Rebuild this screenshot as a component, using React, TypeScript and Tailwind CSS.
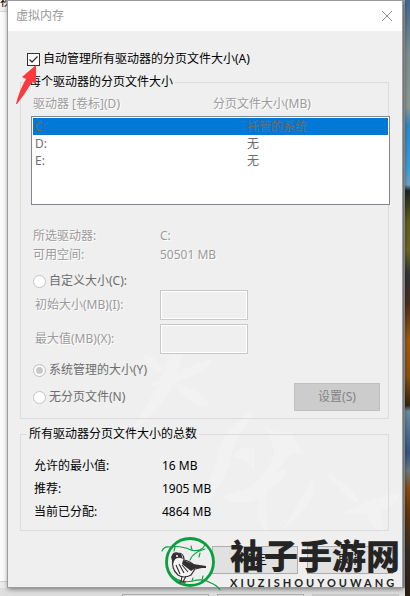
import type { ReactNode } from 'react'

const drives = [
  { name: 'C:', size: '托管的系统', selected: true },
  { name: 'D:', size: '无', selected: false },
  { name: 'E:', size: '无', selected: false },
]

const totals = [
  { label: '允许的最小值:', value: '16 MB' },
  { label: '推荐:', value: '1905 MB' },
  { label: '当前已分配:', value: '4864 MB' },
]

const embossed = 'text-[#9b9b9b] [text-shadow:1px_1px_#fff]'

function Group({ title, className, children }: { title: string; className: string; children: ReactNode }) {
  return (
    <fieldset className={`min-w-0 border border-[#dcdcdc] ${className}`}>
      <legend className="-ml-1 px-0.5 text-black">{title}</legend>
      {children}
    </fieldset>
  )
}

function Radio({ label, checked }: { label: string; checked?: boolean }) {
  return (
    <label className="flex items-center gap-[3px] text-[#6d6d6d]">
      <input
        type="radio"
        name="paging"
        disabled
        defaultChecked={checked}
        className="size-[13px] appearance-none rounded-full border border-[#c4c4c4] bg-white checked:bg-[#c8c8c8] checked:shadow-[inset_0_0_0_2px_#fff]"
      />
      {label}
    </label>
  )
}

function SizeField({ id, label }: { id: string; label: string }) {
  return (
    <div className="flex items-center pl-1">
      <label htmlFor={id} className={`w-[125px] ${embossed}`}>{label}</label>
      <input id={id} type="text" disabled className="h-[30px] w-[88px] border border-[#c8c8c8] bg-[#efefef] px-1 shadow-[inset_0_0_0_1px_#fff]" />
    </div>
  )
}

function Arrow() {
  return (
    <svg viewBox="0 0 24 40" className="absolute top-[64px] left-2 h-10 w-6" aria-hidden="true">
      <path d="M20 0 L6 12 L10 14 Q3 26 0 39 L1 39 Q9 29 16 17 L20 18 Z" fill="#fa3a3c" />
    </svg>
  )
}

function BirdLogo() {
  return (
    <svg viewBox="0 0 62 56" className="h-14 w-[62px] shrink-0" fill="none" aria-hidden="true">
      <circle cx="29" cy="27" r="23.5" stroke="#0a9f3c" strokeWidth="2.8" />
      <g stroke="#0a9f3c" strokeWidth="1.1" strokeLinecap="round">
        <path d="M1 16 Q3 11 8 12 Q20 10 30 15 Q37 17 42 13 L45 8" />
        <path d="M44 14 Q31 18 29 25 M31 15 L30 11 M39 18 L38 22 M14 12 L13 16" />
        <path d="M10 40 Q19 49 32 46 Q42 43 50 48 Q57 51 59 55" />
        <path d="M41 45 L42 41 M31 46 L32 43 M22 47 L25 50" />
      </g>
      <path d="M12 24 Q10 17 17 18 Q23 18 23 25 Q29 26 34 31 L43 32 L34 34 L30 40 Q23 44 17 40 Q10 34 12 24 Z" fill="#f5f5f5" stroke="#332f30" strokeWidth="1.2" />
      <path d="M10 22 Q13 16 20 19 L22 24 Q14 20 12 29 Z M22 25 L32 29 L45 31 L45 33 L35 33 L30 36 L21 29 Z" fill="#332f30" />
      <path d="M15 30 L19 39 M18 29 L23 38 M21 30 L27 37 M21 41 L20 47 M25 41 L22 47 M18 47 L25 47" stroke="#332f30" strokeWidth="1.1" />
      <circle cx="16" cy="21" r="1" fill="#fff" />
    </svg>
  )
}

function Brand() {
  return (
    <div className="absolute right-0.5 bottom-[-4px] flex items-start gap-[7px]" aria-label="袖子手游网">
      <BirdLogo />
      <div className="pt-0.5 text-[#242424]">
        <p className="text-[34px] leading-[38px] font-black whitespace-nowrap">袖子手游网</p>
        <p className="mt-0.5 font-['Lato'] text-[11px] leading-3 font-bold tracking-[3px] whitespace-nowrap">XIUZISHOUYOUWANG</p>
      </div>
    </div>
  )
}

function Brushwork() {
  return (
    <svg viewBox="0 0 280 200" className="pointer-events-none absolute right-0 bottom-[50px] h-[200px] w-[280px]" fill="#fff" opacity="0.22" aria-hidden="true">
      <path d="M20 18 Q32 16 42 34 Q34 40 20 18 Z M52 4 Q64 10 56 34 Q44 72 6 96 Q34 62 52 4 Z M26 48 Q52 36 88 22 Q92 32 62 42 Q42 52 26 48 Z M52 46 Q76 50 88 68 Q70 74 52 46 Z" />
      <path d="M118 84 Q128 70 130 80 Q112 100 108 124 Q98 160 62 182 Q90 146 96 118 Q100 96 118 84 Z" />
      <path d="M112 116 Q128 106 133 112 L132 134 Q126 122 112 120 Z M142 90 Q160 98 170 94 Q172 108 186 118 Q168 112 160 128 Q146 150 124 154 Q146 136 152 118 Q150 100 142 90 Z" />
      <path d="M100 160 Q134 150 162 132 Q170 140 144 154 L146 198 Q134 186 136 162 Q116 172 100 160 Z M190 142 Q200 150 180 176 L160 194 Q176 168 190 142 Z M204 136 Q226 144 238 166 Q224 164 204 136 Z M222 176 Q250 160 276 156 Q280 166 258 174 L262 198 Q248 190 246 178 Z" />
    </svg>
  )
}

function Dialog() {
  return (
    <section className="relative min-w-0 flex-1 border border-[#9b9b9b] bg-[#efefef] shadow-[1px_1px_5px_rgba(0,0,0,0.5)]">
      <header className="flex h-[30px] items-center justify-between bg-white pr-[9px] pl-2 text-[#999]">
        <h1>虚拟内存</h1>
        <button type="button" aria-label="关闭" className="flex size-3 items-center justify-center">
          <svg viewBox="0 0 12 12" className="size-3" stroke="#8c8c8c" aria-hidden="true">
            <path d="M1 1 L11 11 M11 1 L1 11" />
          </svg>
        </button>
      </header>
      <Brushwork />

      <form className="relative pt-5 pr-[13px] pb-[13px] pl-3">
        <label className="ml-[7px] flex items-center gap-[3px] text-black">
          <span className="grid size-[13px] place-items-center">
            <input type="checkbox" defaultChecked className="col-start-1 row-start-1 size-[13px] appearance-none border border-[#333] bg-white" />
            <svg viewBox="0 0 13 13" className="pointer-events-none z-10 col-start-1 row-start-1 size-[13px]" fill="none" stroke="#333" strokeWidth="1.3" aria-hidden="true">
              <path d="M2.5 6.5 L5 9 L10.5 3.5" />
            </svg>
          </span>
          自动管理所有驱动器的分页文件大小(A)
        </label>

        <Group title="每个驱动器的分页文件大小" className="mt-[7px] pb-[7px] pl-2.5">
          <div className={`flex pt-1.5 pl-0.5 ${embossed}`}>
            <span className="w-[180px]">驱动器 [卷标](D)</span>
            <span>分页文件大小(MB)</span>
          </div>
          <div className="mt-1 -mr-0.5 min-h-[89px] border border-[#828790] bg-white p-px">
            <table className="w-full table-fixed text-left text-[#6d6d6d]">
              <tbody>
                {drives.map(drive => (
                  <tr key={drive.name} className={drive.selected ? 'h-[17px] bg-[#0078d7]' : 'h-[17px]'}>
                    <td className="w-[214px] pl-0.5">{drive.name}</td>
                    <td>{drive.size}</td>
                  </tr>
                ))}
              </tbody>
            </table>
          </div>

          <dl className={`mt-[23px] grid grid-cols-[127px_1fr] gap-y-[3px] pl-0.5 ${embossed}`}>
            <dt>所选驱动器:</dt>
            <dd>C:</dd>
            <dt>可用空间:</dt>
            <dd>50501 MB</dd>
          </dl>

          <div className="mt-2.5 pl-0.5">
            <Radio label="自定义大小(C):" />
          </div>
          <div className="mt-px flex flex-col gap-1">
            <SizeField id="initial" label="初始大小(MB)(I):" />
            <SizeField id="maximum" label="最大值(MB)(X):" />
          </div>
          <div className="mt-2 pl-0.5">
            <Radio label="系统管理的大小(Y)" checked />
          </div>
          <div className="mt-[5px] flex items-center justify-between pr-2 pl-0.5">
            <Radio label="无分页文件(N)" />
            <button type="button" disabled className="h-7 w-[86px] border border-[#bfbfbf] bg-[#ccc] text-[#838383]">设置(S)</button>
          </div>
        </Group>

        <Group title="所有驱动器分页文件大小的总数" className="mt-[7px] pb-2.5 pl-2.5">
          <dl className="mt-4 grid grid-cols-[128px_1fr] gap-y-[7px] pl-[3px] text-black">
            {totals.map(row => (
              <div key={row.label} className="contents">
                <dt>{row.label}</dt>
                <dd>{row.value}</dd>
              </div>
            ))}
          </dl>
        </Group>

        <div className="mt-[15px] -mr-1 flex justify-end gap-[9px] text-black">
          <button type="button" className="h-7 w-[86px] border border-[#adadad] bg-[#e1e1e1]">确定</button>
          <button type="button" className="h-7 w-[86px] border border-[#adadad] bg-[#e1e1e1]">取消</button>
        </div>
      </form>
      <Arrow />
      <Brand />
    </section>
  )
}

export default function App() {
  return (
    <main className="flex min-h-screen flex-col overflow-hidden bg-[#ececec] font-['Noto_Sans','Noto_Sans_CJK_SC',sans-serif] text-[12px] leading-4">
      <div className="flex flex-1">
        <div className="flex min-w-0 flex-1 flex-col">
          <div className="flex">
            <div className="flex w-[7px] shrink-0 flex-col overflow-hidden">
              <div className="h-3 border-b border-[#d5d5d5] bg-[#f0f0f0] leading-[4px] whitespace-nowrap text-black">视觉</div>
              <div className="flex-1 border-b border-[#d5d5d5] bg-[#fbfbfb]" />
              <div className="h-1.5" />
            </div>
            <Dialog />
            <div className="w-0.5 bg-[#a5a9ab]" />
          </div>
          {/* parent window's buttons, cut off by the screen edge */}
          <div className="flex h-2 justify-end gap-2 overflow-hidden bg-[#dedede] pt-1.5 pr-1.5">
            <button type="button" aria-label="确定" className="h-7 w-[87px] border border-[#adadad] bg-[#e1e1e1]" />
            <button type="button" aria-label="取消" className="h-7 w-[87px] border border-[#adadad] bg-[#e1e1e1]" />
            <button type="button" aria-label="应用" className="h-7 w-[87px] border border-[#c8c8c8] bg-[#ccc]" />
          </div>
        </div>
        {/* desktop wallpaper */}
        <div className="w-[5px] bg-[linear-gradient(#3f6896,#7f8f90_9%,#8b9a94_18%,#2f88c4_21%,#3f9bd6_28%,#6ba3c4_31%,#1c2420_32%,#5c5c18_37%,#6d641c_42%,#303236_46%,#4c2c18_51%,#9a5a14_57%,#8d4f10_63%,#32240f_68%,#6a8ca0_69%,#335484_76%,#6a7880_79%,#8a4a10_82%,#633509_86%,#302a26_93%,#281e14)]" />
      </div>
    </main>
  )
}
